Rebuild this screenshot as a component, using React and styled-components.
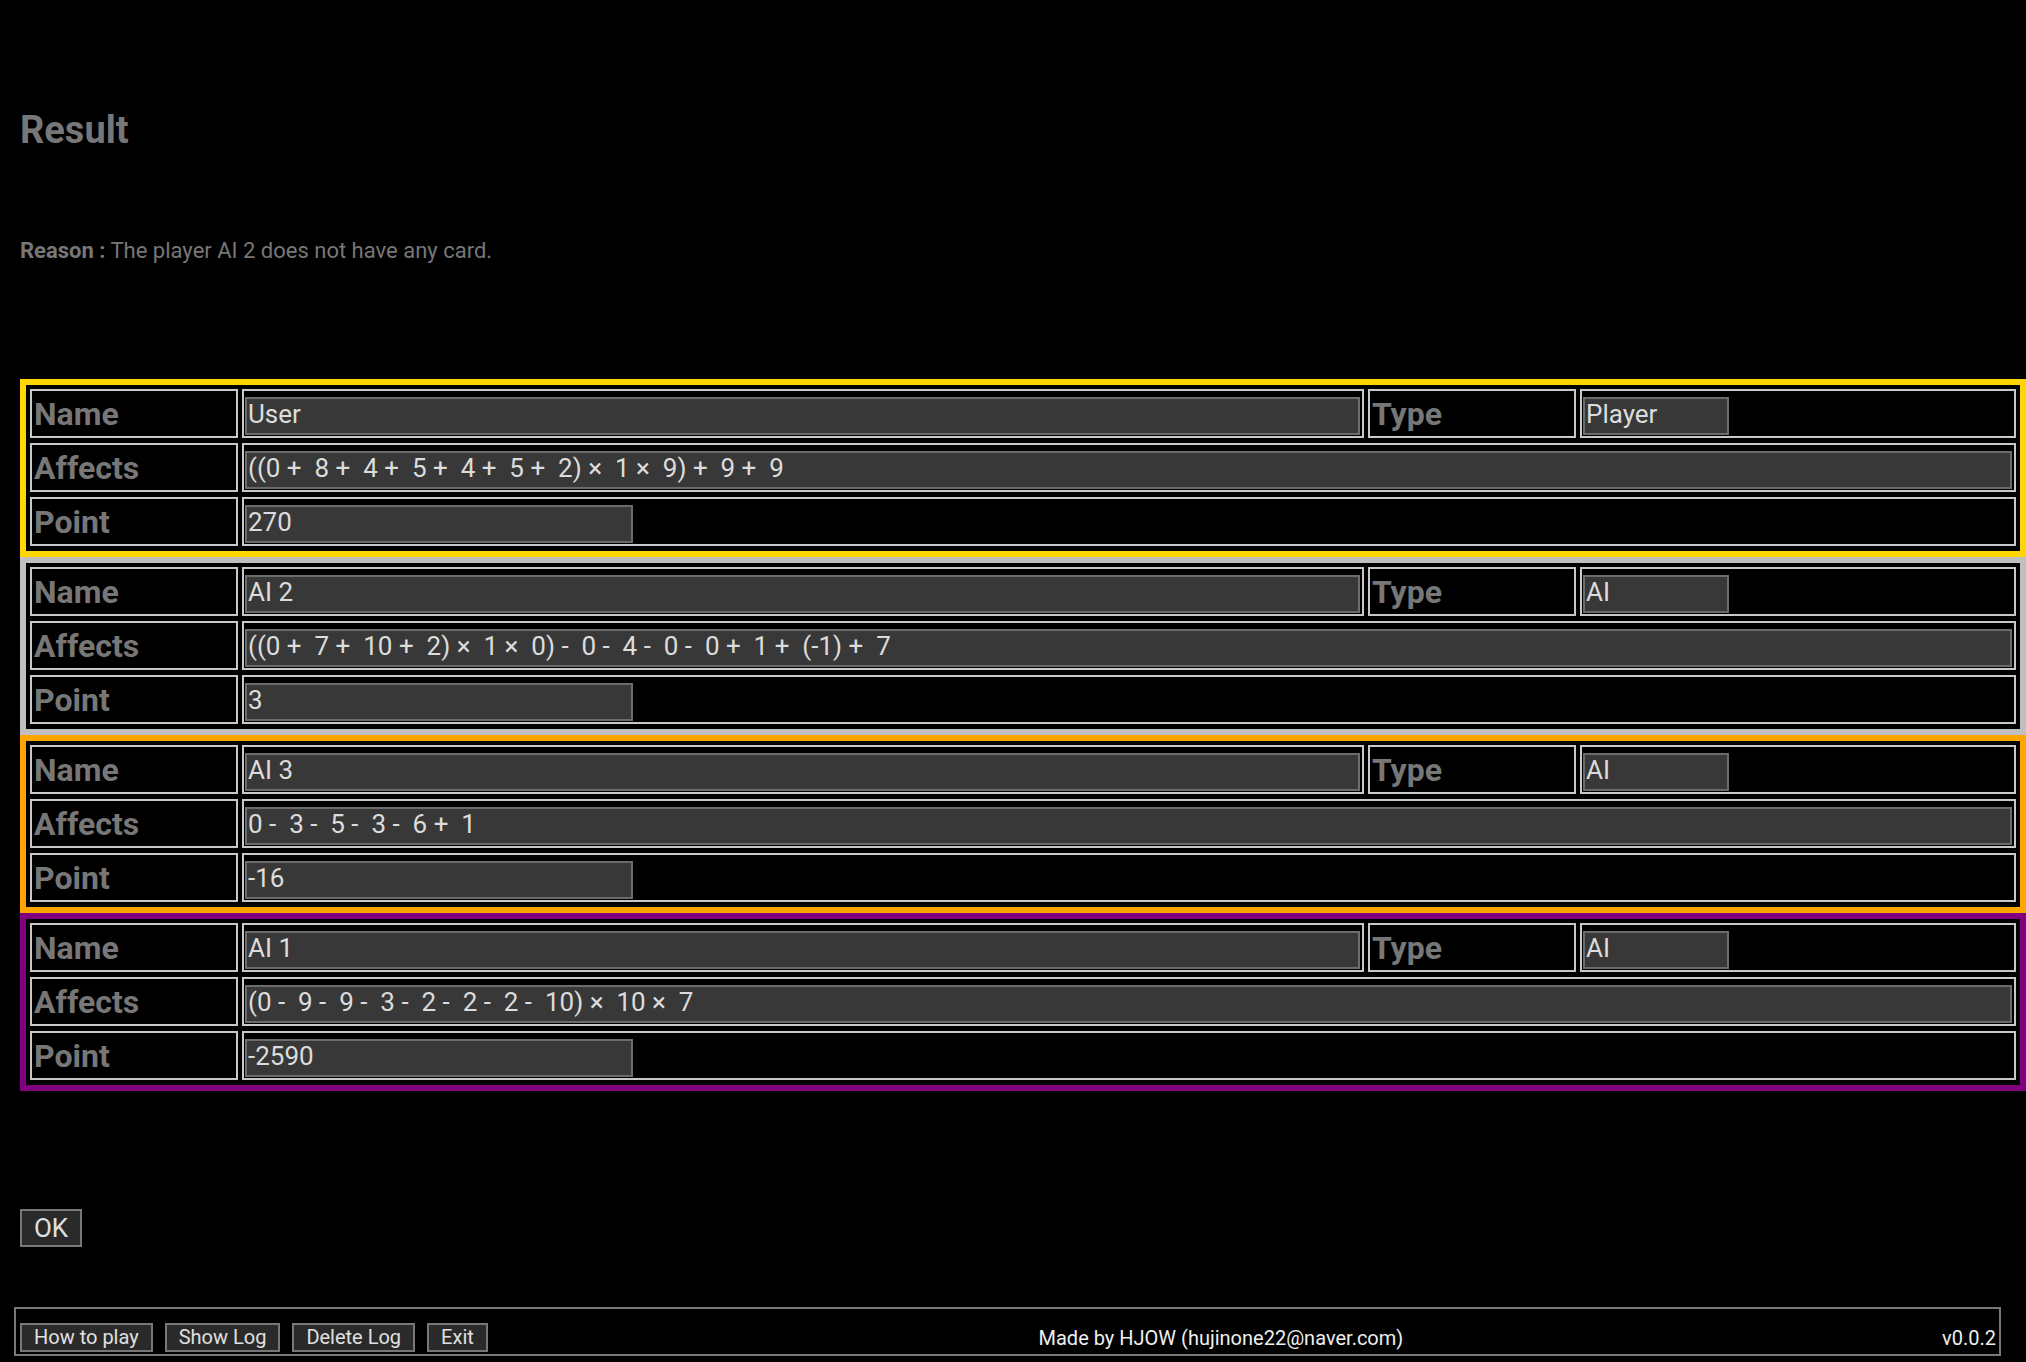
import React from "react";
import styled, { createGlobalStyle } from "styled-components";

const Global = createGlobalStyle`
  html, body { margin: 0; padding: 0; background: #000; }
  body { font-family: Roboto, "Noto Sans", sans-serif; color: #777; }
`;

const Page = styled.div`
  display: flex;
  flex-direction: column;
  align-items: flex-start;
  padding-left: 20px;
  min-height: 1362px;
  box-sizing: border-box;
`;

const Title = styled.h1`
  margin: 108px 0 0;
  font-size: 38px;
  line-height: 44px;
  font-weight: 700;
  color: #777;
`;

const Reason = styled.p`
  margin: 86px 0 0;
  font-size: 22px;
  line-height: 26px;
  color: #777;
  b { font-weight: 700; }
`;

const Results = styled.div`
  margin-top: 115px;
  align-self: stretch;
  display: flex;
  flex-direction: column;
`;

const Block = styled.div`
  border: 6px solid ${(p) => p.$color};
  padding: 4px 4px 5px;
  display: grid;
  grid-template-columns: 208px 1fr 208px 436px;
  grid-auto-rows: 49px;
  column-gap: 4px;
  row-gap: 5px;
  box-sizing: border-box;
`;

const Cell = styled.div`
  border: 2px solid #c8c8c8;
  box-sizing: border-box;
  padding: 6px 2px 1px 1px;
  grid-column: ${(p) => p.$span || "auto"};
  display: flex;
  align-items: flex-start;
  min-width: 0;
`;

const Label = styled(Cell)`
  padding: 0 0 0 2px;
  align-items: center;
  font-size: 32px;
  font-weight: 700;
  color: #777;
`;

const Field = styled.div`
  box-sizing: border-box;
  height: 38px;
  width: ${(p) => p.$w || "100%"};
  background: #383838;
  border: 2px solid #6c6c6c;
  padding: 0 1px;
  font-size: 26px;
  line-height: 30px;
  color: #dcdcdc;
  white-space: pre;
  overflow: hidden;
`;

const OkButton = styled.button`
  margin-top: 118px;
  width: 62px;
  height: 38px;
  background: #2a2a2a;
  border: 2px solid #777;
  color: #e0e0e0;
  font-family: Roboto, sans-serif;
  font-size: 26px;
  padding: 0;
  cursor: pointer;
`;

const Footer = styled.div`
  margin: 60px 0 0 -6px;
  width: 1987px;
  box-sizing: border-box;
  border: 2px solid #777;
  padding: 14px 3px 2px 4px;
  display: flex;
  align-items: center;
`;

const FootButton = styled.button`
  height: 29px;
  margin-right: 12px;
  padding: 0 12px;
  background: #2a2a2a;
  border: 2px solid #777;
  color: #e0e0e0;
  font-family: Roboto, sans-serif;
  font-size: 20px;
  line-height: 25px;
  cursor: pointer;
`;

const Credit = styled.div`
  flex: 1;
  text-align: center;
  font-size: 20px;
  color: #eee;
`;

const Version = styled.div`
  font-size: 20px;
  color: #eee;
`;

const players = [
  { color: "#ffd700", name: "User", type: "Player", affects: "((0 +  8 +  4 +  5 +  4 +  5 +  2) ×  1 ×  9) +  9 +  9", point: "270" },
  { color: "#c0c0c0", name: "AI 2", type: "AI", affects: "((0 +  7 +  10 +  2) ×  1 ×  0) -  0 -  4 -  0 -  0 +  1 +  (-1) +  7", point: "3" },
  { color: "#ffa500", name: "AI 3", type: "AI", affects: "0 -  3 -  5 -  3 -  6 +  1", point: "-16" },
  { color: "#800080", name: "AI 1", type: "AI", affects: "(0 -  9 -  9 -  3 -  2 -  2 -  2 -  10) ×  10 ×  7", point: "-2590" },
];

export default function App() {
  return (
    <>
      <Global />
      <Page>
        <Title>Result</Title>
        <Reason>
          <b>Reason :</b> The player AI 2 does not have any card.
        </Reason>
        <Results>
          {players.map((p) => (
            <Block key={p.name} $color={p.color}>
              <Label>Name</Label>
              <Cell><Field>{p.name}</Field></Cell>
              <Label>Type</Label>
              <Cell><Field $w="146px">{p.type}</Field></Cell>
              <Label>Affects</Label>
              <Cell $span="span 3"><Field>{p.affects}</Field></Cell>
              <Label>Point</Label>
              <Cell $span="span 3"><Field $w="388px">{p.point}</Field></Cell>
            </Block>
          ))}
        </Results>
        <OkButton>OK</OkButton>
        <Footer>
          <FootButton>How to play</FootButton>
          <FootButton>Show Log</FootButton>
          <FootButton>Delete Log</FootButton>
          <FootButton>Exit</FootButton>
          <Credit>Made by HJOW (hujinone22@naver.com)</Credit>
          <Version>v0.0.2</Version>
        </Footer>
      </Page>
    </>
  );
}
